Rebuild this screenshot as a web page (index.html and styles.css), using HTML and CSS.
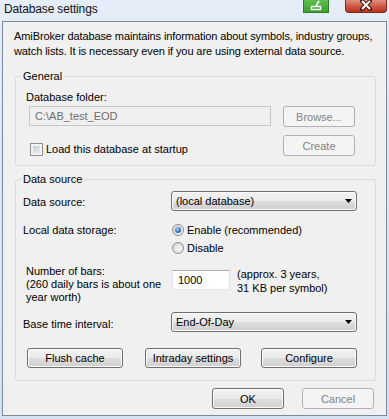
FILE: index.html
```html
<!DOCTYPE html>
<html lang="en">
<head>
    <meta charset="UTF-8">
    <meta name="viewport" content="width=device-width, initial-scale=1.0">
    <title>Database settings</title>
    <link rel="stylesheet" href="styles.css">
</head>
<body>
    <div class="window">
        <div class="titlebar">
            <span class="title">Database settings</span>
            <div class="caption-buttons">
                <span class="cap-btn cap-green">
                    <svg width="24" height="11" viewBox="0 0 24 11">
                        <rect x="7.5" y="6.5" width="9" height="3" fill="none" stroke="#fff" stroke-width="1.4"/>
                        <line x1="15" y1="1" x2="12" y2="6" stroke="#fff" stroke-width="1.6"/>
                    </svg>
                </span>
                <span class="cap-btn cap-close">
                    <svg width="40" height="11" viewBox="0 0 40 11">
                        <path d="M16 1 L24 9 M24 1 L16 9" stroke="#4a1b14" stroke-width="4" stroke-linecap="round"/>
                        <path d="M16 1 L24 9 M24 1 L16 9" stroke="#fff" stroke-width="2"/>
                    </svg>
                </span>
            </div>
        </div>

        <div class="client">
            <p class="intro">AmiBroker database maintains information about symbols, industry groups,<br>watch lists. It is necessary even if you are using external data source.</p>

            <fieldset class="group general">
                <legend>General</legend>
                <div class="group-body general-body">
                    <div class="folder-label">Database folder:</div>
                    <div class="row">
                        <input class="textbox folder" type="text" value="C:\AB_test_EOD" disabled>
                        <button class="btn" disabled>Browse...</button>
                    </div>
                    <div class="row row-bottom">
                        <label class="check"><span class="checkbox"></span>Load this database at startup</label>
                        <button class="btn" disabled>Create</button>
                    </div>
                </div>
            </fieldset>

            <fieldset class="group source">
                <legend>Data source</legend>
                <div class="group-body source-body">
                    <div class="ds-row">
                        <div class="ds-label combo-label">Data source:</div>
                        <div class="combo">
                            <span>(local database)</span>
                            <svg width="7" height="4" viewBox="0 0 7 4"><path d="M0 0 H7 L3.5 4 Z" fill="#000"/></svg>
                        </div>
                    </div>

                    <div class="ds-row storage-row">
                        <div class="ds-label storage-label">Local data storage:</div>
                        <div class="radios">
                            <label class="radio-line"><span class="radio checked"></span>Enable (recommended)</label>
                            <label class="radio-line"><span class="radio"></span>Disable</label>
                        </div>
                    </div>

                    <div class="ds-row bars-row">
                        <div class="ds-label bars-label">Number of bars:<br>(260 daily bars is about one<br>year worth)</div>
                        <input class="textbox bars" type="text" value="1000">
                        <div class="bars-note">(approx. 3 years,<br>31 KB per symbol)</div>
                    </div>

                    <div class="ds-row interval-row">
                        <div class="ds-label combo-label interval-label">Base time interval:</div>
                        <div class="combo">
                            <span>End-Of-Day</span>
                            <svg width="7" height="4" viewBox="0 0 7 4"><path d="M0 0 H7 L3.5 4 Z" fill="#000"/></svg>
                        </div>
                    </div>

                    <div class="action-row">
                        <button class="btn action flush">Flush cache</button>
                        <button class="btn action intraday">Intraday settings</button>
                        <button class="btn action configure">Configure</button>
                    </div>
                </div>
            </fieldset>

            <div class="footer">
                <button class="btn footer-btn">OK</button>
                <button class="btn footer-btn" disabled>Cancel</button>
            </div>
        </div>
    </div>
</body>
</html>
```

FILE: styles.css
```css
* {
    box-sizing: border-box;
}

body {
    margin: 0;
    font-family: 'Liberation Sans', Arial, sans-serif;
    font-size: 11px;
    color: #000;
    background: #cfdff2;
}

.window {
    width: 389px;
    height: 419px;
    background: linear-gradient(#e4edf8, #d3e2f3);
}

/* title bar */
.titlebar {
    height: 21px;
    display: flex;
    align-items: flex-start;
}

.title {
    padding: 3px 0 0 4px;
    font-size: 12px;
    line-height: 13px;
    letter-spacing: -0.15px;
    color: #111;
}

.caption-buttons {
    margin-left: auto;
    margin-right: 2px;
    display: flex;
    gap: 16px;
}

.cap-btn {
    display: block;
    height: 13px;
    border: 1px solid;
    border-top: none;
}

.cap-btn svg {
    display: block;
}

.cap-green {
    width: 26px;
    background: linear-gradient(#5cc04b, #3fa032);
    border-color: #2f7c25;
}

.cap-close {
    width: 42px;
    background: linear-gradient(#e2907f, #cd5a45 50%, #b8341f);
    border-color: #7b2a1d;
    border-radius: 0 0 4px 4px;
}

/* client area */
.client {
    margin: 0 2px;
    height: 395px;
    border: 1px solid #7d8998;
    background: #f0f0f0;
}

.intro {
    margin: 0;
    padding: 7px 0 0 11px;
    line-height: 15px;
    letter-spacing: -0.1px;
    white-space: nowrap;
}

.group {
    margin: 11px 0 0 12px;
    width: 361px;
    padding: 0;
    min-width: 0;
    border: 1px solid #d5dce2;
    border-radius: 3px;
}

.group legend {
    margin-left: 5px;
    padding: 0 2px;
    line-height: 13px;
}

.source {
    margin-top: 7px;
}

.general-body {
    padding: 8px 0 9px 13px;
}

.folder-label {
    margin-left: -3px;
    line-height: 13px;
}

.row {
    width: 326px;
    display: flex;
    justify-content: space-between;
    margin-top: 2px;
}

.row-bottom {
    margin-top: 8px;
    align-items: flex-end;
}

.check {
    display: flex;
    align-items: center;
    line-height: 13px;
    margin-left: 1px;
}

.checkbox {
    width: 13px;
    height: 13px;
    margin-right: 3px;
    border: 1px solid #8e8f8f;
    background: linear-gradient(135deg, #c2c6cc, #f4f4f4);
    box-shadow: inset 0 0 0 2px #f4f4f4;
}

/* text boxes */
.textbox {
    height: 20px;
    padding: 0 0 0 5px;
    font: inherit;
    color: #000;
    background: #fff;
    border: 1px solid;
    border-color: #abadb3 #dbdfe6 #e3e9ef #e2e3ea;
    outline: none;
}

.folder {
    width: 242px;
    margin-top: 0;
}

.textbox:disabled {
    background: #f0f0f0;
    color: #6d6d6d;
    border-color: #c4c8cc;
}

/* buttons */
.btn {
    height: 21px;
    width: 72px;
    padding: 0;
    font: inherit;
    color: #000;
    border: 1px solid #707070;
    border-radius: 3px;
    background: linear-gradient(#f2f2f2 0%, #ebebeb 50%, #dddddd 51%, #cfcfcf 100%);
    box-shadow: inset 0 0 0 1px #fbfbfb;
}

.btn:disabled {
    color: #838383;
    border-color: #adb2b5;
    background: #f4f4f4;
    box-shadow: none;
}

/* data source group */
.source-body {
    padding: 5px 0 12px 7px;
}

.ds-row {
    display: flex;
    align-items: flex-start;
}

.ds-label {
    width: 148px;
    flex: none;
    line-height: 13px;
    white-space: nowrap;
}

.combo-label {
    padding-top: 5px;
}

.combo {
    width: 186px;
    height: 20px;
    display: flex;
    align-items: center;
    justify-content: space-between;
    padding: 0 4px 0 4px;
    border: 1px solid #707070;
    border-radius: 3px;
    background: linear-gradient(#f2f2f2 0%, #ebebeb 50%, #dddddd 51%, #cfcfcf 100%);
    box-shadow: inset 0 0 0 1px #fbfbfb;
}

.combo svg {
    display: block;
}

.storage-row {
    margin-top: 10px;
}

.storage-label {
    line-height: 18px;
}

.radio-line {
    display: flex;
    align-items: center;
    height: 18px;
    margin-left: 1px;
}

.radio {
    position: relative;
    width: 12px;
    height: 12px;
    margin-right: 3px;
    border: 1px solid #8e8f8f;
    border-radius: 50%;
    background: radial-gradient(circle at 60% 60%, #f6f6f6, #cfd2d6);
}

.radio.checked::after {
    content: '';
    position: absolute;
    left: 2px;
    top: 2px;
    width: 6px;
    height: 6px;
    border-radius: 50%;
    background: radial-gradient(circle at 40% 35%, #a8d6f6, #2a6db5 60%, #18478a);
}

.bars-row {
    margin-top: 8px;
}

.bars-label {
    width: 145px;
    margin-left: 3px;
}

.bars {
    width: 58px;
    margin: 5px 0 0 1px;
}

.bars-note {
    margin: 2px 0 0 7px;
    line-height: 14px;
}

.interval-row {
    margin-top: 8px;
}

.interval-label {
    padding-top: 6px;
}

.action-row {
    display: flex;
    margin-top: 16px;
    padding-left: 4px;
}

.action {
    width: 96px;
    height: 20px;
}

.intraday {
    margin-left: 22px;
}

.configure {
    margin-left: 20px;
}

.footer {
    display: flex;
    justify-content: flex-end;
    gap: 18px;
    margin-top: 7px;
    padding-right: 12px;
}
```
